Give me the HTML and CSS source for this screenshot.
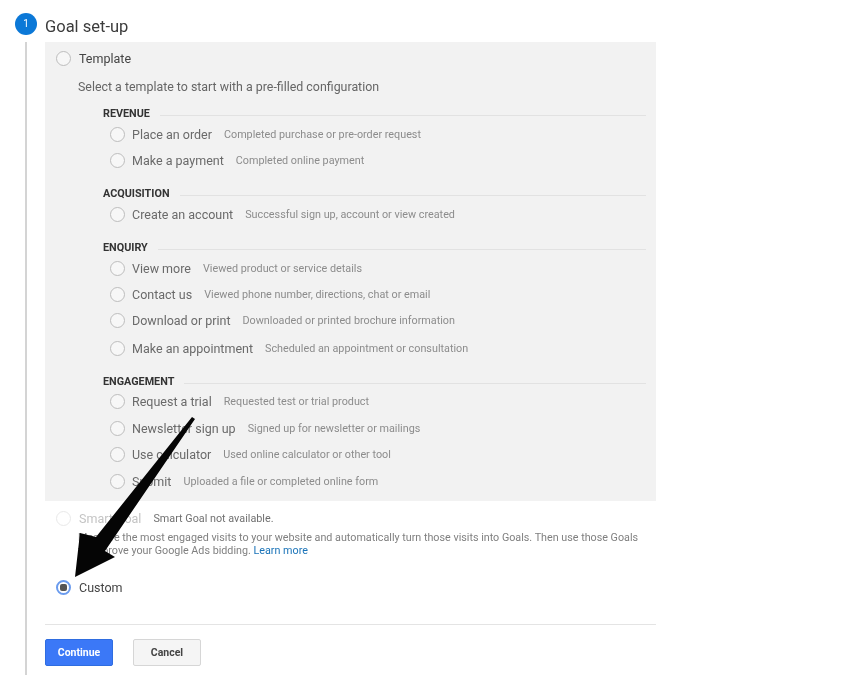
FILE: index.html
```html
<!DOCTYPE html>
<html>
<head>
    <title>Goal set-up</title>
    <link rel="stylesheet" href="styles.css">
</head>
<body>
    <div class="page">
        <div class="step-head">
            <div class="step-num">1</div>
            <h1>Goal set-up</h1>
        </div>

        <div class="step-body">
            <div class="panel">
                <div class="main-opt">
                    <span class="radio"></span>
                    <span class="main-label">Template</span>
                </div>
                <p class="intro">Select a template to start with a pre-filled configuration</p>

                <div class="group">
                    <div class="group-title"><span>REVENUE</span></div>
                    <div class="row"><span class="radio"></span><span class="name">Place an order</span><span class="desc">Completed purchase or pre-order request</span></div>
                    <div class="row"><span class="radio"></span><span class="name">Make a payment</span><span class="desc">Completed online payment</span></div>
                </div>

                <div class="group">
                    <div class="group-title"><span>ACQUISITION</span></div>
                    <div class="row"><span class="radio"></span><span class="name">Create an account</span><span class="desc">Successful sign up, account or view created</span></div>
                </div>

                <div class="group">
                    <div class="group-title"><span>ENQUIRY</span></div>
                    <div class="row"><span class="radio"></span><span class="name">View more</span><span class="desc">Viewed product or service details</span></div>
                    <div class="row"><span class="radio"></span><span class="name">Contact us</span><span class="desc">Viewed phone number, directions, chat or email</span></div>
                    <div class="row"><span class="radio"></span><span class="name">Download or print</span><span class="desc">Downloaded or printed brochure information</span></div>
                    <div class="row taller"><span class="radio"></span><span class="name">Make an appointment</span><span class="desc">Scheduled an appointment or consultation</span></div>
                </div>

                <div class="group">
                    <div class="group-title"><span>ENGAGEMENT</span></div>
                    <div class="row short"><span class="radio"></span><span class="name">Request a trial</span><span class="desc">Requested test or trial product</span></div>
                    <div class="row tall"><span class="radio"></span><span class="name">Newsletter sign up</span><span class="desc">Signed up for newsletter or mailings</span></div>
                    <div class="row"><span class="radio"></span><span class="name">Use calculator</span><span class="desc">Used online calculator or other tool</span></div>
                    <div class="row tall"><span class="radio"></span><span class="name">Submit</span><span class="desc">Uploaded a file or completed online form</span></div>
                </div>
            </div>

            <div class="smart">
                <div class="main-opt">
                    <span class="radio disabled"></span>
                    <span class="main-label off">Smart Goal</span>
                    <span class="smart-note">Smart Goal not available.</span>
                </div>
                <p class="smart-text">Measure the most engaged visits to your website and automatically turn those visits into Goals. Then use those Goals to improve your Google Ads bidding. <a href="#">Learn more</a></p>
            </div>

            <div class="main-opt custom">
                <span class="radio checked"></span>
                <span class="main-label">Custom</span>
            </div>

            <div class="actions">
                <button class="btn primary">Continue</button>
                <button class="btn">Cancel</button>
            </div>
        </div>

        <svg class="arrow" width="850" height="675" viewBox="0 0 850 675">
            <polygon points="195,419 105,551 115,557 75,577 80,533 96,537 192,417"/>
        </svg>
    </div>
</body>
</html>
```

FILE: styles.css
```css
html, body {
    margin: 0;
    padding: 0;
    background-color: #ffffff;
}
.page {
    position: relative;
    width: 850px;
    height: 675px;
    overflow: hidden;
    font-family: Roboto, Arial, sans-serif;
    color: #333333;
    filter: blur(0.35px);
}
.step-head {
    display: flex;
    align-items: center;
    gap: 8px;
    height: 42px;
    padding: 6px 0 0 15px;
    box-sizing: border-box;
}
.step-num {
    width: 22px;
    height: 22px;
    border-radius: 50%;
    background-color: #0b78d7;
    color: #ffffff;
    font-size: 10px;
    line-height: 22px;
    text-align: center;
}
h1 {
    margin: 4px 0 0;
    font-size: 16.5px;
    font-weight: 400;
    color: #3c3c3c;
}
.step-body {
    margin-left: 25px;
    padding-left: 18px;
    width: 611px;
    height: 633px;
    border-left: 2px solid #d4d4d4;
}
.panel {
    background-color: #f2f2f2;
    height: 459px;
    padding-top: 5px;
    box-sizing: border-box;
}
.radio {
    display: block;
    flex: none;
    width: 13px;
    height: 13px;
    border: 1px solid #bdbdbd;
    border-radius: 50%;
    background-color: #f7f7f7;
}
.main-opt {
    display: flex;
    align-items: center;
    height: 22px;
    padding-left: 11px;
}
.main-label {
    margin-left: 8px;
    font-size: 12.5px;
    color: #444444;
}
.intro {
    margin: 10px 0 0 33px;
    height: 14px;
    font-size: 12.4px;
    line-height: 16px;
    color: #666666;
}
.group {
    margin: 0 10px 0 58px;
    padding-top: 12px;
}
.group-title {
    display: flex;
    align-items: center;
    height: 16px;
    font-size: 10.8px;
    font-weight: 700;
    color: #333333;
}
.group-title::after {
    content: "";
    flex: 1;
    height: 1px;
    margin: 4px 0 0 10px;
    background-color: #e2e2e2;
}
.row {
    display: flex;
    align-items: center;
    height: 26px;
    padding-left: 7px;
}
.row.short {
    height: 25px;
}
.row.tall {
    height: 26px;
    padding-top: 1px;
}
.row.taller {
    height: 26px;
    padding-top: 2px;
}
.name {
    margin-left: 7px;
    font-size: 12.5px;
    color: #6a6a6a;
}
.desc {
    margin-left: 12px;
    font-size: 10.8px;
    color: #8c8c8c;
}
.smart {
    margin-top: 6px;
}
.radio.disabled {
    border-color: #e8e8e8;
    background-color: #ffffff;
}
.main-label.off {
    color: #c4c4c4;
}
.smart-note {
    margin-left: 12px;
    font-size: 10.8px;
    color: #707070;
}
.smart-text {
    margin: 2px 0 0 33px;
    width: 565px;
    font-size: 10.75px;
    line-height: 13px;
    color: #808080;
}
.smart-text a {
    color: #1a73b8;
    text-decoration: none;
}
.custom {
    margin-top: 19px;
}
.radio.checked {
    position: relative;
    border: 2px solid #6a9bee;
    width: 11px;
    height: 11px;
    background-color: #ffffff;
}
.radio.checked::after {
    content: "";
    position: absolute;
    left: 2px;
    top: 2px;
    width: 7px;
    height: 7px;
    border-radius: 2px;
    background-color: #555555;
}
.actions {
    display: flex;
    gap: 20px;
    margin-top: 26px;
    padding-top: 14px;
    border-top: 1px solid #e4e4e4;
}
.btn {
    width: 68px;
    height: 27px;
    padding: 0;
    border: 1px solid #d6d6d6;
    border-radius: 2px;
    background-color: #f5f5f5;
    color: #444444;
    font-family: Roboto, Arial, sans-serif;
    font-size: 10.5px;
    font-weight: 700;
}
.btn.primary {
    border-color: #2f6de0;
    background-color: #3b78f7;
    color: #ffffff;
}
.arrow {
    position: absolute;
    left: 0;
    top: 0;
    fill: #050505;
}
```
